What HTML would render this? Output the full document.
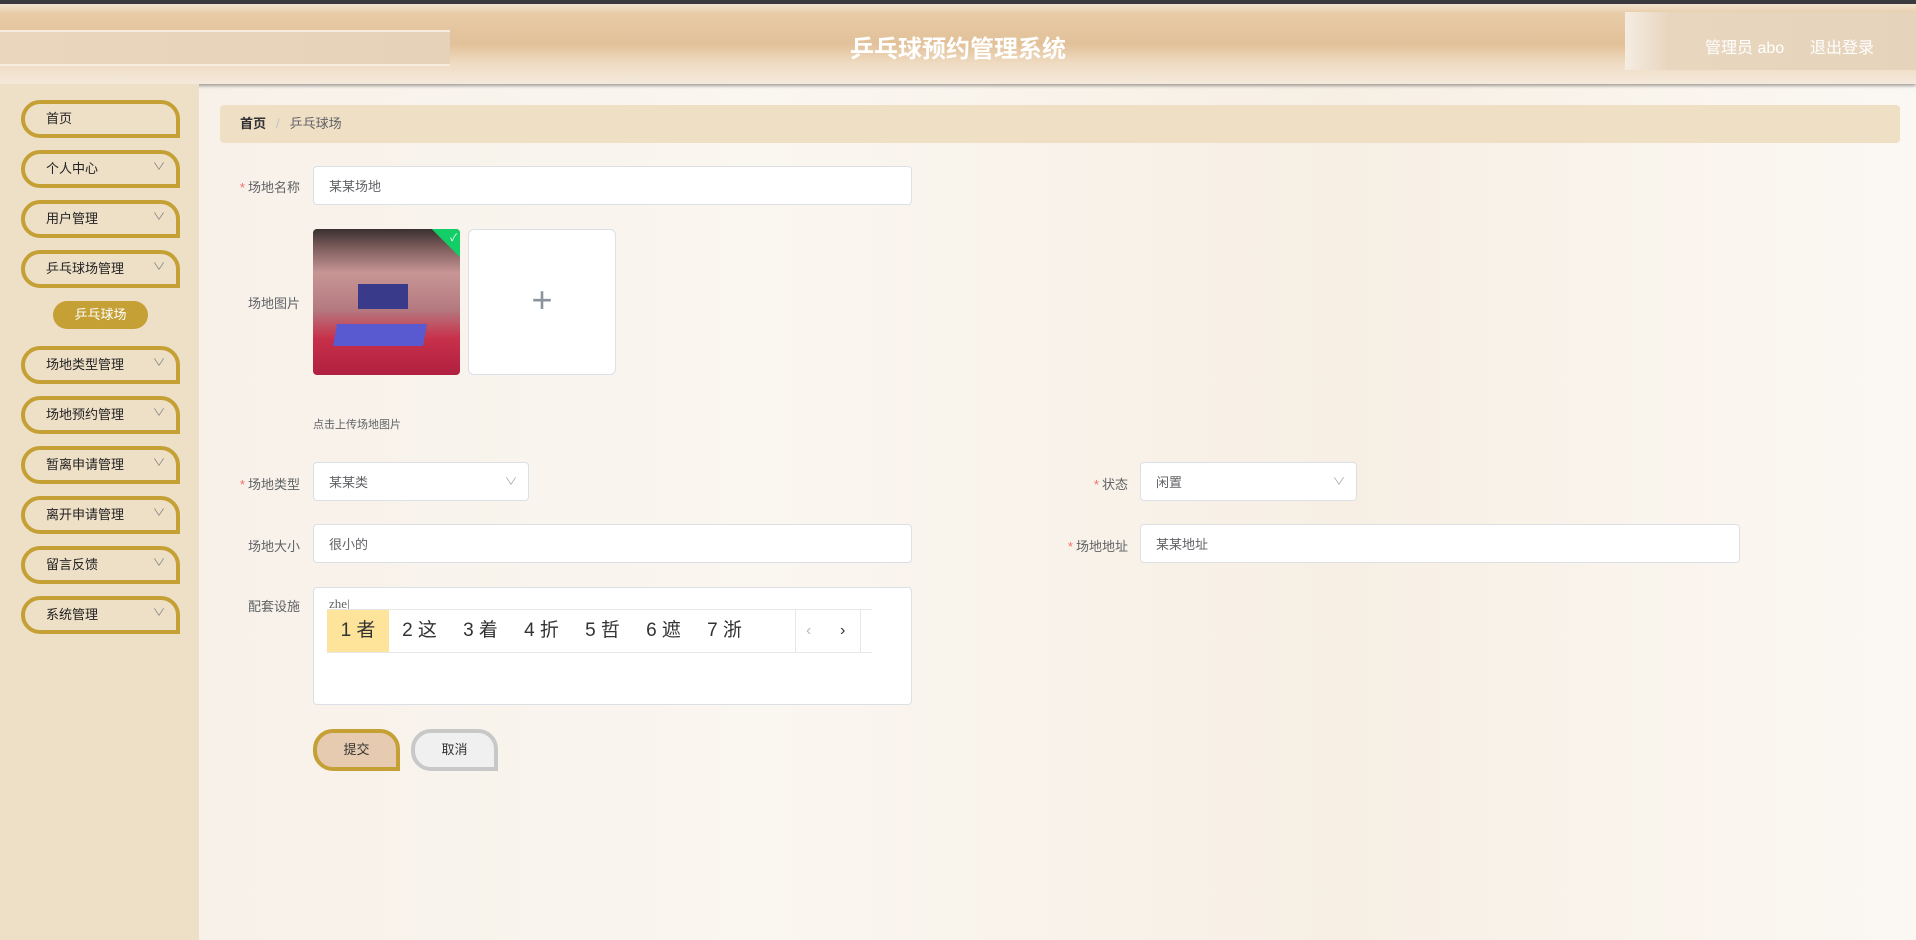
<!DOCTYPE html>
<html><head><meta charset="utf-8"><style>
*{box-sizing:border-box;margin:0;padding:0}
body{width:1916px;height:940px;overflow:hidden;font-family:"Liberation Sans","Noto Sans CJK SC",sans-serif;background:linear-gradient(90deg,#f6efe6 0%,#faf6f0 40%,#f7efe4 70%,#fbf8f3 100%);position:relative;color:#606266}
.top{position:absolute;left:0;top:0;width:1916px;height:4px;background:#3a3a3e}
.hdr{position:absolute;left:0;top:4px;width:1916px;height:80px;background:linear-gradient(180deg,#f2e4d2 0%,#e8cba6 12%,#e2c199 50%,#efdcc4 75%,#f4e9dc 100%);box-shadow:0 2px 3px rgba(0,0,0,.35)}
.hdr .l{position:absolute;left:0;top:26px;width:450px;height:36px;background:linear-gradient(90deg,#ead6bd,#e6d2b8);border-top:2px solid #f6ece0;border-bottom:2px solid #f6ece0}
.hdr .r{position:absolute;left:1625px;top:8px;width:291px;height:58px;background:linear-gradient(90deg,#f5ece2,#e8d6bf 15%,#e6d3bb)}
.title{position:absolute;left:0;width:1916px;top:29px;text-align:center;color:#fff;font-size:24px;font-weight:bold}
.user{position:absolute;top:34px;color:#fff;font-size:16px}
.side{position:absolute;left:0;top:84px;width:199px;height:856px;background:#eedfc7}
.mi{position:absolute;left:21px;width:159px;height:38px;border:4px solid #c4a035;border-radius:20px 20px 0 20px;font-size:13px;color:#222;padding-left:21px;line-height:30px}
.mi .ch{position:absolute;right:12px;top:-1px;font-size:10px;color:#888;transform:scaleX(1.3)}
.sub{position:absolute;left:53px;top:301px;width:95px;height:28px;border-radius:14px;background:#c4a035;color:#fff;font-size:13px;text-align:center;line-height:28px}
.bc{position:absolute;left:220px;top:105px;width:1680px;height:38px;background:#efdfc5;border-radius:4px;font-size:13px;line-height:38px;padding-left:20px;color:#606266}
.bc b{color:#303133;font-weight:bold}
.lab{position:absolute;font-size:13px;color:#606266;text-align:right;width:120px}
.lab i{color:#f56c6c;font-style:normal;margin-right:3px}
.in{position:absolute;background:#fff;border:1px solid #dcdfe6;border-radius:4px;font-size:13px;color:#606266;padding-left:15px;line-height:40px}
.arr{position:absolute;right:12px;top:0;color:#aaa;font-size:10px;transform:scaleX(1.3)}
.btn{position:absolute;top:729px;height:42px;width:87px;border-radius:20px 20px 0 20px;font-size:13px;text-align:center;line-height:34px;color:#333}
</style></head><body>
<div class="top"></div>
<div class="hdr"><div class="l"></div><div class="r"></div></div>
<div class="title">乒乓球预约管理系统</div>
<div class="user" style="left:1705px">管理员 abo</div>
<div class="user" style="left:1810px">退出登录</div>
<div class="side"></div>
<div class="mi" style="top:100px">首页</div>
<div class="mi" style="top:150px">个人中心<span class="ch">∨</span></div>
<div class="mi" style="top:200px">用户管理<span class="ch">∨</span></div>
<div class="mi" style="top:250px">乒乓球场管理<span class="ch">∨</span></div>
<div class="sub">乒乓球场</div>
<div class="mi" style="top:346px">场地类型管理<span class="ch">∨</span></div>
<div class="mi" style="top:396px">场地预约管理<span class="ch">∨</span></div>
<div class="mi" style="top:446px">暂离申请管理<span class="ch">∨</span></div>
<div class="mi" style="top:496px">离开申请管理<span class="ch">∨</span></div>
<div class="mi" style="top:546px">留言反馈<span class="ch">∨</span></div>
<div class="mi" style="top:596px">系统管理<span class="ch">∨</span></div>
<div class="bc"><b>首页</b><span style="color:#c0c4cc;margin:0 10px">/</span>乒乓球场</div>

<div class="lab" style="left:180px;top:177px"><i>*</i>场地名称</div>
<div class="in" style="left:313px;top:166px;width:599px;height:39px">某某场地</div>

<div class="lab" style="left:180px;top:293px">场地图片</div>
<div style="position:absolute;left:313px;top:229px;width:147px;height:146px;border-radius:4px;overflow:hidden;background:linear-gradient(180deg,#3a3030 0%,#7a5a5a 12%,#c89595 30%,#b47a80 55%,#c8304a 75%,#b02040 100%)">
<div style="position:absolute;left:22px;top:95px;width:90px;height:22px;background:#5a5ad0;transform:skewX(-10deg)"></div>
<div style="position:absolute;left:45px;top:55px;width:50px;height:25px;background:#3a3a8a"></div>
<div style="position:absolute;right:-20px;top:-20px;width:40px;height:40px;background:#13ce66;transform:rotate(45deg)"></div>
<span style="position:absolute;right:3px;top:0;color:#fff;font-size:10px">✓</span></div>
<div style="position:absolute;left:468px;top:229px;width:148px;height:146px;background:#fff;border:1px solid #dcdfe6;border-radius:6px;text-align:center;line-height:140px;font-size:36px;color:#8c939d;font-weight:200">+</div>
<div style="position:absolute;left:313px;top:416px;font-size:11px;color:#606266">点击上传场地图片</div>

<div class="lab" style="left:180px;top:474px"><i>*</i>场地类型</div>
<div class="in" style="left:313px;top:462px;width:216px;height:39px">某某类<span class="arr">∨</span></div>
<div class="lab" style="left:1008px;top:474px"><i>*</i>状态</div>
<div class="in" style="left:1140px;top:462px;width:217px;height:39px">闲置<span class="arr">∨</span></div>

<div class="lab" style="left:180px;top:536px">场地大小</div>
<div class="in" style="left:313px;top:524px;width:599px;height:39px">很小的</div>
<div class="lab" style="left:1008px;top:536px"><i>*</i>场地地址</div>
<div class="in" style="left:1140px;top:524px;width:600px;height:39px">某某地址</div>

<div class="lab" style="left:180px;top:596px">配套设施</div>
<div class="in" style="left:313px;top:587px;width:599px;height:118px;line-height:18px;padding-top:7px;font-family:'Liberation Serif',serif">zhe|</div>
<div style="position:absolute;left:327px;top:609px;width:545px;height:44px;background:#fff;border-top:1px solid #e6e6e6;border-bottom:1px solid #e6e6e6;font-size:19px;line-height:42px;color:#333;font-family:'Liberation Sans','Noto Sans CJK SC',sans-serif">
<span style="display:inline-block;width:62px;background:#fde49a;text-align:center">1 者</span><span style="display:inline-block;width:61px;text-align:center">2 这</span><span style="display:inline-block;width:61px;text-align:center">3 着</span><span style="display:inline-block;width:61px;text-align:center">4 折</span><span style="display:inline-block;width:61px;text-align:center">5 哲</span><span style="display:inline-block;width:61px;text-align:center">6 遮</span><span style="display:inline-block;width:61px;text-align:center">7 浙</span>
<span style="position:absolute;left:468px;top:0;width:66px;height:42px;border-left:1px solid #e6e6e6;border-right:1px solid #e6e6e6;font-size:16px"><span style="position:absolute;left:10px;color:#bbb">‹</span><span style="position:absolute;left:44px">›</span></span></div>

<div class="btn" style="left:313px;background:#e6cbb0;border:4px solid #c4a035">提交</div>
<div class="btn" style="left:411px;background:#f0f0f0;border:4px solid #c8c8c8">取消</div>
</body></html>
